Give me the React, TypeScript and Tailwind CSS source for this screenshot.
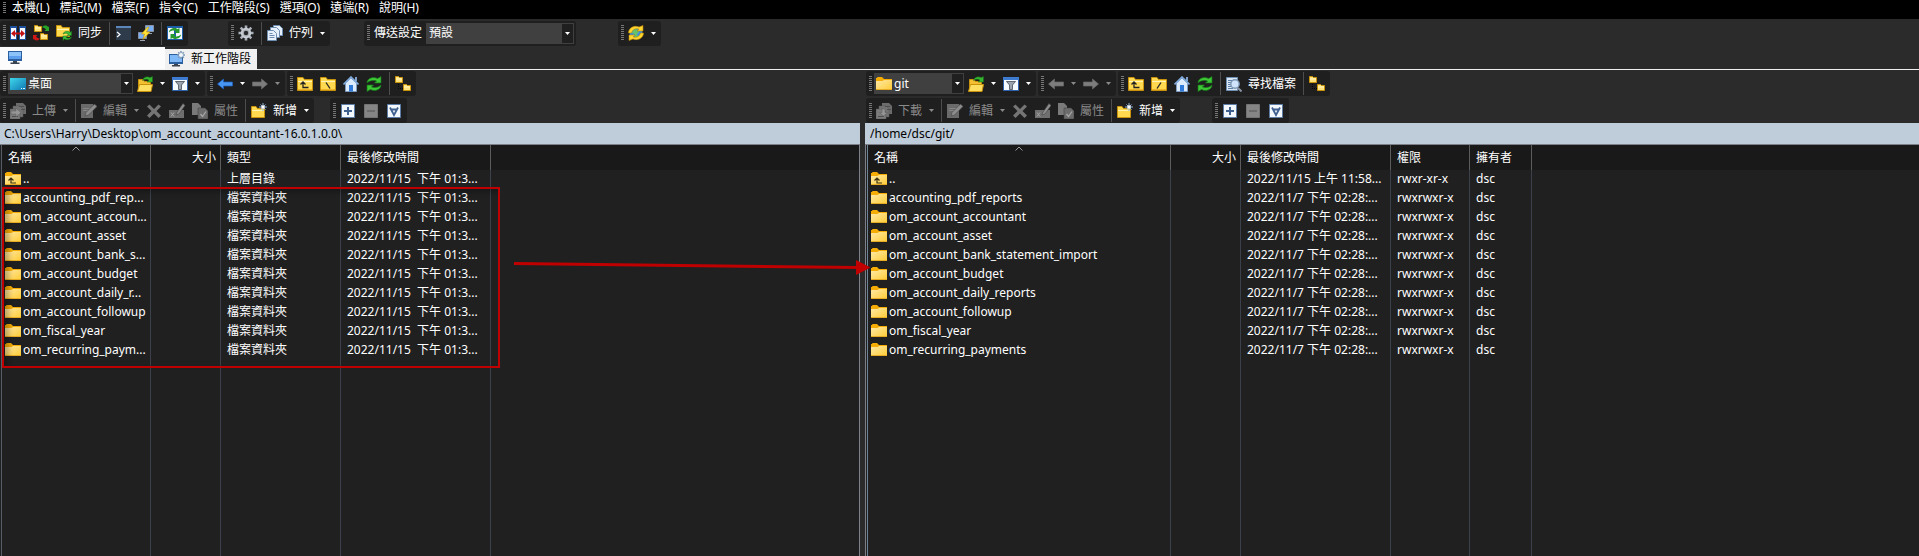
import React from "react";

type Kids = { children?: React.ReactNode };

/* ---------- icons ---------- */

function Svg({ children }: Kids) {
  return (
    <svg width="16" height="16" viewBox="0 0 16 16" className="block shrink-0" aria-hidden="true">
      {children}
    </svg>
  );
}

const MiniFolder = ({ x, y }: { x: number; y: number }) => (
  <g transform={`translate(${x} ${y})`}>
    <path d="M0.5 6.5V0.5H3.5L4.5 1.5H7.5V6.5Z" fill="#ffe27a" stroke="#c8920c" />
    <path d="M1 3h6" stroke="#fff5c4" />
  </g>
);

const FolderBase = () => (
  <>
    <path d="M0.5 14.5V1.5H6L7.5 3.5H15.5V14.5Z" fill="#ffd94f" stroke="#c8920c" />
    <path d="M1 5.5H15" stroke="#fff3b8" />
    <path d="M1 13.5H15" stroke="#eeb52a" />
  </>
);

const CompareIcon = () => (
  <Svg>
    <path d="M0 1h7v14H0zM9 1h7v14H9z" fill="#1c4f9c" />
    <path d="M1 3h5v11H1zM10 3h5v11H10z" fill="#f4f8ff" />
    <path d="M1 8.500L5 5v2.500h6V5l4 3.500-4 3.500V9.500H5V12z" fill="#c41212" />
  </Svg>
);
const SyncFoldersIcon = () => (
  <Svg>
    <MiniFolder x={1} y={0} />
    <MiniFolder x={7} y={8} />
    <path d="M9 2.500C10.500 0 14 0 15 2l1-.5V6h-4.500L13 4.500C12 3 10.500 2.500 9 2.500z" fill="#27a527" />
    <path d="M7 13.500C5.500 16 2 16 1 14l-1 .5V10h4.500L3 11.500c1 1.500 2.500 2 4 2z" fill="#d01818" />
  </Svg>
);
const FolderSyncIcon = () => (
  <Svg>
    <path d="M0.500 11.500V0.500H5L6.500 2.500H13.500V11.500Z" fill="#ffd94f" stroke="#c8920c" />
    <path d="M1 4.500H13" stroke="#fff3b8" />
    <path d="M7 9c1-3 5-3.500 7-1.500L15.500 6v4.500H11l1.500-1.500C11 8 9 8 7 9z" fill="#3cc03c" stroke="#16701a" strokeWidth=".5" />
    <path d="M15.500 12c-1 3-5 3.500-7 1.800L7 15.500V11h4.500L10 12.500c1.500 1 3.500.8 5.500-.5z" fill="#3cc03c" stroke="#16701a" strokeWidth=".5" />
  </Svg>
);
const TerminalIcon = () => (
  <Svg>
    <path d="M1 1h15v14H1z" fill="#2d3b4b" />
    <path d="M1 1h15v2H1z" fill="#5d86ba" />
    <path d="M2 7l3 2.500L2 12" stroke="#fff" strokeWidth="1.200" fill="none" />
  </Svg>
);
const PuttyIcon = () => (
  <Svg>
    <path d="M7.500 0.500h8v6h-8zM0.500 7.500h8v6h-8z" fill="#77aef5" stroke="#8793a3" />
    <path d="M10 8.500h4M2 15.500h5" stroke="#9aa4b2" />
    <path d="M9.500 2L3.500 9h3L5 14.500 12 7H8.500L11 2z" fill="#ffe23a" stroke="#c49207" strokeWidth=".6" />
  </Svg>
);
const RefreshBoxIcon = () => (
  <Svg>
    <path d="M0 1h16v14H0z" fill="#1c5fa8" />
    <path d="M1 3h6v11H1zM9 3h6v11H9z" fill="#f4f8ff" />
    <path d="M2 7.500c0-4 6-5.500 8.500-3.500L12.500 3v5H7.500L9 6.200C7 5 4 5.500 2 7.500z" fill="#279a2c" />
    <path d="M14 9.500c0 4-6 5.500-8.500 3.500L3.500 14V9h5L7 10.800c2 1.200 5 .7 7-1.300z" fill="#279a2c" />
  </Svg>
);
const GearIcon = () => (
  <Svg>
    <g stroke="#aab2bc" strokeWidth="2.600">
      <path d="M8 0.500v15M0.500 8h15M2.700 2.700l10.600 10.600M13.300 2.700L2.700 13.300" />
    </g>
    <circle cx="8" cy="8" r="5.200" fill="#c9ced4" />
    <circle cx="8" cy="8" r="3.400" fill="#a9afb7" />
    <circle cx="8" cy="8" r="2.200" fill="#26282b" />
  </Svg>
);
const QueueIcon = () => (
  <Svg>
    <g fill="#e6f0fb" stroke="#6d8cb0" strokeWidth="1">
      <path d="M6.500 0.500h6l3 3v7h-9z" />
      <path d="M3.500 2.500h6l3 3v7h-9z" />
      <path d="M0.500 5.500h6l3 3v7h-9z" />
    </g>
    <path d="M2.500 8.500h3M2.500 10.500h5M2.500 12.500h5" stroke="#6d8cb0" />
  </Svg>
);
const GlobeSyncIcon = () => (
  <Svg>
    <circle cx="8" cy="8" r="6.500" fill="#3d8fdc" />
    <path d="M5 5l4-1 2 3-2 2 1 3-3 1-1-4-2-1z" fill="#67c06a" />
    <path d="M0.500 8C0.500 3 6 0 11 2l4-1.500V6H9L11 4.200C7.500 3 4.500 4.500 3.500 8z" fill="#ffd52e" stroke="#b98505" strokeWidth=".6" />
    <path d="M15.500 8c0 5-5.500 8-10.500 6l-4 1.500V10h6L5 11.800c3.500 1.200 6.500-.3 7.500-3.800z" fill="#ffd52e" stroke="#b98505" strokeWidth=".6" />
  </Svg>
);
const MonitorIcon = () => (
  <Svg>
    <path d="M1 2h14v10H1z" fill="#2b5f9e" />
    <path d="M2 3h12v7H2z" fill="#8ec3fa" />
    <path d="M2 7h12v3H2z" fill="#5d9fec" />
    <path d="M6 12h4v1.500H6zM3.500 13.500h9V15h-9z" fill="#3a4450" />
  </Svg>
);
const MonitorNewIcon = () => (
  <Svg>
    <path d="M0 3h14v10H0z" fill="#2b5f9e" />
    <path d="M1 4h12v7H1z" fill="#7fb9f7" />
    <path d="M5 13h4v1H5zM3 14h8v1.500H3z" fill="#3a4450" />
    <path d="M12 0v8M8 4h8M9.200 1.200l5.600 5.600M14.800 1.200L9.200 6.800" stroke="#7f9ab8" strokeWidth="1.600" />
    <circle cx="12" cy="4" r="2" fill="#f4f8fc" />
  </Svg>
);
const DesktopIcon = () => (
  <Svg>
    <defs>
      <linearGradient id="desk" x1="0" y1="0" x2="1" y2="1">
        <stop offset="0" stopColor="#3fd6ea" />
        <stop offset="1" stopColor="#0f78b4" />
      </linearGradient>
    </defs>
    <path d="M0 2h16v12H0z" fill="url(#desk)" />
    <path d="M11 12.500h1M13 12.500h2" stroke="#d8f4ff" />
  </Svg>
);
const FolderOpenIcon = () => (
  <Svg>
    <path d="M1.500 14.500V3.500H6L7.500 5.500H13.500V8" fill="#f4bf31" stroke="#c8920c" />
    <path d="M0.500 15.500L2.500 8.500H15.500L14 15.500Z" fill="#ffdf62" stroke="#c8920c" />
    <path d="M5.500 4.500C6.500 1 10 0 13 1.500L15.500 0.500V6H10l2-1.800C10 3 8 3 5.500 4.500z" fill="#36b52f" stroke="#17691a" strokeWidth=".5" />
  </Svg>
);
const FilterIcon = () => (
  <Svg>
    <path d="M0.500 1.500h15v13H0.500z" fill="#f6fbff" stroke="#2c62ad" />
    <path d="M0 1h16v3H0z" fill="#3c7bd0" />
    <path d="M3.500 5.500h9L9.500 9v4.500h-3V9z" fill="#9aa3ad" stroke="#454c55" strokeWidth=".8" />
  </Svg>
);
const BackIcon = ({ on }: { on?: boolean }) => (
  <Svg>
    <path d="M0.500 8L6.500 3v3H15.500v4H6.500v3z" fill={on ? "#4796f2" : "#7d7d7d"} stroke={on ? "#1c5fbe" : "#696969"} strokeWidth=".7" />
  </Svg>
);
const ForwardIcon = () => (
  <Svg>
    <path d="M15.500 8L9.500 3v3H0.500v4H9.500v3z" fill="#7d7d7d" stroke="#696969" strokeWidth=".7" />
  </Svg>
);
const FolderUpIcon = () => (
  <Svg>
    <FolderBase />
    <path d="M6 6.500v5h5.500M3.500 8.500L6 6l2.500 2.500" fill="none" stroke="#222" strokeWidth="1.300" />
  </Svg>
);
const FolderRootIcon = ({ slash }: { slash: "left" | "right" }) => (
  <Svg>
    <FolderBase />
    <path d={slash === "left" ? "M6 6.500L10 12.500" : "M10 6.500L6 12.500"} stroke="#222" strokeWidth="1.300" />
  </Svg>
);
const HomeIcon = () => (
  <Svg>
    <path d="M2.500 7V15.500H13.500V7L8 2z" fill="#dcebfb" stroke="#7fa2cc" strokeWidth=".8" />
    <path d="M12 1h2v4h-2z" fill="#7fa2cc" />
    <path d="M0.500 8.500L8 1l7.500 7.500" fill="none" stroke="#7ea9da" strokeWidth="1.600" />
    <path d="M6 9h4v6.500H6z" fill="#2f7ad8" />
  </Svg>
);
const ReloadIcon = () => (
  <Svg>
    <path d="M1 7C1 2.500 7 0 11.500 2.500L15 0.500V7H8.500l2-2C7 4 3.500 4.500 1 7z" fill="#3ec836" stroke="#14701a" strokeWidth=".7" />
    <path d="M15 9c0 4.500-6 7-10.500 4.500L1 15.500V9h6.500l-2 2c3.500 1 7 .5 9.500-2z" fill="#3ec836" stroke="#14701a" strokeWidth=".7" />
  </Svg>
);
const TreeIcon = () => (
  <Svg>
    <MiniFolder x={0} y={0} />
    <MiniFolder x={8} y={8} />
    <path d="M3.500 8v4.500H8" fill="none" stroke="#050505" strokeDasharray="1 1" />
  </Svg>
);
const FindIcon = () => (
  <Svg>
    <path d="M0.500 1.500h11v13h-11z" fill="#d9e6f4" stroke="#6f8fb3" />
    <path d="M2 4.500h4M2 6.500h3M2 8.500h3M2 10.500h3M2 12.500h5" stroke="#5c7fa8" />
    <path d="M12 12l3.500 3.500" stroke="#8894a3" strokeWidth="2" />
    <circle cx="9" cy="8" r="4.200" fill="#cfe4fa" stroke="#7c96b3" strokeWidth="1.400" />
  </Svg>
);
const CopyDocsIcon = ({ down }: { down?: boolean }) => (
  <Svg>
    <path d="M6 0h7l3 3v8H6z" fill="#6c6c6c" />
    <path d="M3 3h7l3 3v8H3z" fill="#747474" stroke="#555" strokeWidth=".5" />
    <path d="M0 6h7l3 3v7H0z" fill="#7c7c7c" stroke="#555" strokeWidth=".5" />
    <path d="M9 3.500h5M11 6.500h4M2 13.500h6" stroke="#4e4e4e" />
    <path
      d={down ? "M9 6v3.500h2.500L7.500 13 3.500 9.500H6V6z" : "M1 8h5V5l5 4.500L6 14v-3H1z"}
      fill="#969696"
      stroke="#5a5a5a"
      strokeWidth=".5"
    />
  </Svg>
);
const EditIcon = () => (
  <Svg>
    <path d="M0 1h12v14H0z" fill="#6a6a6a" />
    <path d="M2 5.500h7M2 7.500h5" stroke="#858585" />
    <path d="M4 13l1-3.500L13.500 1 16 3.500 7.500 12z" fill="#8d8d8d" stroke="#444" strokeWidth=".6" />
  </Svg>
);
const DeleteIcon = () => (
  <Svg>
    <path d="M1 3.500L3.500 1.500 8 6l4.500-4.500L15 3.500 10.500 8l4.500 4.500-2.500 2.500L8 10.500 3.500 15 1 12.500 5.500 8z" fill="#757575" />
  </Svg>
);
const RenameIcon = () => (
  <Svg>
    <path d="M0 7h15v8H0z" fill="#6f6f6f" />
    <path d="M2 9.500l3 4M5 9.500l-3 4" stroke="#a6a6a6" />
    <path d="M7 12l1-3L14 0.500l2 2L10 11z" fill="#8d8d8d" stroke="#444" strokeWidth=".6" />
  </Svg>
);
const PropsIcon = () => (
  <Svg>
    <path d="M0 0h6l3 3v9H0z" fill="#7a7a7a" />
    <path d="M6 5h7l3 3v8H6z" fill="#6c6c6c" stroke="#444" strokeWidth=".6" />
    <path d="M8.500 11l2 2.500L14 8.500" stroke="#a8a8a8" strokeWidth="1.300" fill="none" />
  </Svg>
);
const NewFolderIcon = () => (
  <Svg>
    <path d="M0.500 14.500V3.500H5L6.500 5.500H13.500V14.500Z" fill="#ffd94f" stroke="#c8920c" />
    <path d="M1 7.500H13" stroke="#fff3b8" />
    <path d="M12 0v8M8 4h8M9.500 1.500l5 5M14.500 1.500l-5 5" stroke="#8fb3d8" />
    <circle cx="12" cy="4" r="1.800" fill="#fff" />
  </Svg>
);
const BoxIcon = ({ kind }: { kind: "plus" | "minus" | "filter" }) => (
  <Svg>
    <path d="M1.500 1.500h13v13h-13z" fill={kind === "minus" ? "#858585" : "#f3f8fd"} stroke={kind === "minus" ? "#737373" : "#5d7da6"} />
    {kind === "plus" && <path d="M8 4v8M4 8h8" stroke="#40618f" strokeWidth="2" />}
    {kind === "minus" && <path d="M4 8h8" stroke="#6b6b6b" strokeWidth="2" />}
    {kind === "filter" && <path d="M4 4.500L8 12l4-7.500M5 6.500h6" stroke="#40618f" strokeWidth="1.800" fill="none" />}
  </Svg>
);
const ListFolder = ({ up }: { up?: boolean }) => (
  <svg width="16" height="14" viewBox="0 0 16 14" className="block shrink-0" aria-hidden="true">
    <defs>
      <linearGradient id="fold" x1="0" y1="0" x2="1" y2="1">
        <stop offset="0" stopColor="#ffe9a6" />
        <stop offset="1" stopColor="#ffcb35" />
      </linearGradient>
    </defs>
    <path d="M0 1h1l.5-1H6l2 2h8v5H0z" fill="#f5ad06" />
    <path d="M0 4h6.500L8 3h8v10H0z" fill="url(#fold)" />
    <path d="M0 12.500h16" stroke="#e8ac24" />
    {up && <path d="M6 6v5h5M3.500 8.500L6 6l2.500 2.500" fill="none" stroke="#3b3215" strokeWidth="1.200" />}
  </svg>
);

/* ---------- toolbar parts ---------- */

const Arrow = ({ off }: { off?: boolean }) => (
  <svg width="5" height="3" viewBox="0 0 5 3" className="block shrink-0" aria-hidden="true">
    <path d="M0 0h5L2.500 3z" fill={off ? "#8a8a8a" : "#fff"} />
  </svg>
);

const Grip = () => (
  <div className="mr-px h-4 w-[3px] shrink-0 bg-[repeating-linear-gradient(to_bottom,#767676_0_1px,transparent_1px_2px)]" />
);

const Group = ({ children }: Kids) => (
  <div role="toolbar" className="flex h-[25px] shrink-0 items-center rounded-[3px] bg-[#1f1f1f] pr-px pl-[3px]">
    <Grip />
    {children}
  </div>
);

const Sep = () => <div className="mr-0.5 ml-[3px] h-[23px] w-px shrink-0 bg-[#4d4d4d]" />;

function Btn({ icon, text, label, off }: { icon: React.ReactNode; text?: string; label?: string; off?: boolean }) {
  return (
    <button
      type="button"
      disabled={off}
      aria-label={text ? undefined : label}
      className={`flex h-full shrink-0 items-center gap-1.5 pr-1 pl-[3px] whitespace-nowrap ${off ? "text-[#8a8a8a]" : "text-white"}`}
    >
      {icon}
      {text && <span>{text}</span>}
    </button>
  );
}

const Drop = ({ label, off }: { label: string; off?: boolean }) => (
  <button type="button" disabled={off} aria-label={label} className="flex h-full shrink-0 items-center pr-1 pl-[3px]">
    <Arrow off={off} />
  </button>
);

function Combo({ id, label, value, icon, width }: { id: string; label?: string; value: string; icon?: React.ReactNode; width: string }) {
  return (
    <div className={`relative mx-px flex h-[21px] shrink-0 items-center bg-[#404040] ${icon ? "pl-0.5" : ""} ${width}`}>
      {icon}
      <select
        id={id}
        aria-label={label}
        defaultValue={value}
        className={`h-full min-w-0 flex-1 appearance-none text-white outline-none ${icon ? "pl-0.5" : "pl-[3px]"}`}
      >
        <option>{value}</option>
      </select>
      <span className="pointer-events-none absolute inset-y-px right-px flex w-[11px] items-center justify-center bg-[#1f1f1f]">
        <Arrow />
      </span>
    </div>
  );
}

function PanelTools({ remote }: { remote?: boolean }) {
  return (
    <div className={`flex flex-col gap-0.5 pt-px ${remote ? "pl-px" : ""}`}>
      <div className="flex gap-0.5">
        <Group>
          {remote ? (
            <Combo id="remote-dir" label="遠端目錄" value="git" icon={<ListFolder />} width="w-[90px]" />
          ) : (
            <Combo id="local-dir" label="本機目錄" value="桌面" icon={<DesktopIcon />} width="w-[125px]" />
          )}
          <Btn icon={<FolderOpenIcon />} label="開啟目錄" />
          <Drop label="開啟目錄選單" />
          <Btn icon={<FilterIcon />} label="篩選" />
          <Drop label="篩選選單" />
        </Group>
        <Group>
          <Btn icon={<BackIcon on={!remote} />} label="上一頁" off={remote} />
          <Drop label="上一頁選單" off={remote} />
          <Btn icon={<ForwardIcon />} label="下一頁" off />
          <Drop label="下一頁選單" off />
        </Group>
        <Group>
          <Btn icon={<FolderUpIcon />} label="上層目錄" />
          <Btn icon={<FolderRootIcon slash={remote ? "right" : "left"} />} label="根目錄" />
          <Btn icon={<HomeIcon />} label="家目錄" />
          <Btn icon={<ReloadIcon />} label="重新整理" />
          <Sep />
          {remote && (
            <>
              <Btn icon={<FindIcon />} text="尋找檔案" />
              <Sep />
            </>
          )}
          <Btn icon={<TreeIcon />} label="目錄樹" />
        </Group>
      </div>
      <div className={`flex ${remote ? "gap-8" : "gap-4"}`}>
        <Group>
          <Btn icon={<CopyDocsIcon down={remote} />} text={remote ? "下載" : "上傳"} off />
          <Drop label="傳送選單" off />
          <Sep />
          <Btn icon={<EditIcon />} text="編輯" off />
          <Drop label="編輯選單" off />
          <Btn icon={<DeleteIcon />} label="刪除" off />
          <Btn icon={<RenameIcon />} label="重新命名" off />
          <Btn icon={<PropsIcon />} text="屬性" off />
          <Sep />
          <Btn icon={<NewFolderIcon />} text="新增" />
          <Drop label="新增選單" />
        </Group>
        <Group>
          <Btn icon={<BoxIcon kind="plus" />} label="選取" />
          <Btn icon={<BoxIcon kind="minus" />} label="取消選取" off />
          <Btn icon={<BoxIcon kind="filter" />} label="反向選取" />
        </Group>
      </div>
    </div>
  );
}

/* ---------- file table ---------- */

type Column = { title: string; width: string; right?: boolean };

function FileTable({ columns, rows }: { columns: Column[]; rows: string[][] }) {
  return (
    <table className="h-full w-full table-fixed border-separate border-spacing-0 text-left">
      <colgroup>
        {columns.map((c) => (
          <col key={c.title} className={c.width} />
        ))}
        <col />
      </colgroup>
      <thead>
        <tr className="h-[25px] bg-[#191919]">
          {columns.map((c, i) => (
            <th key={c.title} className={`relative border-r border-[#5c5c5c] py-0 font-normal ${c.right ? "pr-1 text-right" : "pl-1.5"}`}>
              {i === 0 && (
                <svg width="9" height="5" viewBox="0 0 9 5" className="absolute top-px left-1/2 -translate-x-1/2" aria-hidden="true">
                  <path d="M1 4.500L4.500 1 8 4.500" fill="none" stroke="#9a9a9a" />
                </svg>
              )}
              {c.title}
            </th>
          ))}
          <td />
        </tr>
      </thead>
      <tbody>
        {rows.map((r, n) => (
          <tr key={r[0]} className="h-[19px]">
            {r.map((cell, i) => (
              <td key={i} className={`overflow-hidden border-r border-[#3a414b] pt-0 pb-px leading-[18px] whitespace-pre ${i === 0 ? "pl-[3px]" : "pl-1.5"}`}>
                {i === 0 ? (
                  <div className="flex items-center gap-0.5">
                    <ListFolder up={n === 0} />
                    {cell}
                  </div>
                ) : (
                  cell
                )}
              </td>
            ))}
            <td />
          </tr>
        ))}
        <tr aria-hidden="true">
          {columns.map((c) => (
            <td key={c.title} className="border-r border-[#3a414b] p-0" />
          ))}
          <td />
        </tr>
      </tbody>
    </table>
  );
}

const localColumns: Column[] = [
  { title: "名稱", width: "w-[149px]" },
  { title: "大小", width: "w-[70px]", right: true },
  { title: "類型", width: "w-[120px]" },
  { title: "最後修改時間", width: "w-[150px]" },
];
const localDate = "2022/11/15  下午 01:3...";
const localRows = [
  ["..", "", "上層目錄", localDate],
  ...[
    "accounting_pdf_rep...",
    "om_account_accoun...",
    "om_account_asset",
    "om_account_bank_s...",
    "om_account_budget",
    "om_account_daily_r...",
    "om_account_followup",
    "om_fiscal_year",
    "om_recurring_paym...",
  ].map((n) => [n, "", "檔案資料夾", localDate]),
];

const remoteColumns: Column[] = [
  { title: "名稱", width: "w-[303px]" },
  { title: "大小", width: "w-[70px]", right: true },
  { title: "最後修改時間", width: "w-[150px]" },
  { title: "權限", width: "w-[79px]" },
  { title: "擁有者", width: "w-[62px]" },
];
const remoteRows = [
  ["..", "", "2022/11/15 上午 11:58...", "rwxr-xr-x", "dsc"],
  ...[
    "accounting_pdf_reports",
    "om_account_accountant",
    "om_account_asset",
    "om_account_bank_statement_import",
    "om_account_budget",
    "om_account_daily_reports",
    "om_account_followup",
    "om_fiscal_year",
    "om_recurring_payments",
  ].map((n) => [n, "", "2022/11/7 下午 02:28:...", "rwxrwxr-x", "dsc"]),
];

const menus = ["本機(L)", "標記(M)", "檔案(F)", "指令(C)", "工作階段(S)", "選項(O)", "遠端(R)", "說明(H)"];

export default function App() {
  return (
    <div className="relative flex h-screen flex-col overflow-hidden bg-[#2b2b2b] font-['Noto_Sans','Noto_Sans_CJK_TC',sans-serif] text-xs leading-4 text-white">
      <nav className="flex h-[19px] shrink-0 items-center bg-black pb-1 pl-[3px]">
        <div className="mr-1.5 h-3 w-[3px] bg-[repeating-linear-gradient(to_bottom,#767676_0_1px,transparent_1px_2px)]" />
        <div className="flex gap-2.5">
          {menus.map((m) => (
            <button key={m} type="button" className="whitespace-nowrap">
              {m}
            </button>
          ))}
        </div>
      </nav>

      <div className="flex h-7 shrink-0 items-center">
        <Group>
          <Btn icon={<CompareIcon />} label="比較目錄" />
          <Btn icon={<SyncFoldersIcon />} label="同步瀏覽" />
          <Btn icon={<FolderSyncIcon />} text="同步" />
          <Sep />
          <Btn icon={<TerminalIcon />} label="終端機" />
          <Btn icon={<PuttyIcon />} label="PuTTY" />
          <Sep />
          <Btn icon={<RefreshBoxIcon />} label="保持更新" />
        </Group>
        <div className="ml-10 flex">
          <Group>
            <Btn icon={<GearIcon />} label="偏好設定" />
            <Sep />
            <Btn icon={<QueueIcon />} text="佇列" />
            <Drop label="佇列選單" />
          </Group>
        </div>
        <div className="ml-[34px] flex">
          <Group>
            <label htmlFor="transfer" className="px-[3px]">
              傳送設定
            </label>
            <Combo id="transfer" value="預設" width="w-[148px]" />
          </Group>
        </div>
        <div className="ml-[42px] flex">
          <Group>
            <Btn icon={<GlobeSyncIcon />} label="更新" />
            <Drop label="更新選單" />
          </Group>
        </div>
      </div>

      <div role="tablist" className="flex h-[23px] shrink-0 items-end border-b border-[#f0f0f0] text-black">
        <button role="tab" type="button" aria-label="工作階段" className="flex h-[22px] w-[165px] items-center bg-[#fcfcfc] pb-0.5 pl-[7px]">
          <MonitorIcon />
        </button>
        <button role="tab" type="button" className="flex h-5 items-center gap-1.5 bg-[#f0f0f0] pr-1.5 pl-1 whitespace-nowrap">
          <MonitorNewIcon />
          新工作階段
        </button>
      </div>

      <main className="grid min-h-0 flex-1 grid-cols-[865fr_1054fr]">
        <section className="mr-[5px] flex min-h-0 min-w-0 flex-col">
          <PanelTools />
          <div className="h-[21px] shrink-0 bg-[#bfcddb] pl-1 leading-[22px] text-black">
            C:\Users\Harry\Desktop\om_account_accountant-16.0.1.0.0\
          </div>
          <div className="min-h-0 flex-1 border-t border-r border-[#7d8088] bg-[#202020] pl-px">
            <div className="h-full border-l border-[#555c66]">
              <FileTable columns={localColumns} rows={localRows} />
            </div>
          </div>
        </section>
        <section className="flex min-h-0 min-w-0 flex-col">
          <PanelTools remote />
          <div className="h-[21px] shrink-0 bg-[#bfcddb] pl-[5px] leading-[22px] text-black">/home/dsc/git/</div>
          <div className="min-h-0 flex-1 border-t border-l border-[#7d8088] bg-[#202020] pl-px">
            <div className="h-full border-l border-[#6f8397]">
              <FileTable columns={remoteColumns} rows={remoteRows} />
            </div>
          </div>
        </section>
      </main>

      <div className="pointer-events-none absolute top-[187px] left-0.5 h-[181px] w-[498px] border-2 border-[#c00000] shadow-[inset_5px_3px_5px_rgba(0,0,0,0.25)]" />
      <svg width="360" height="20" viewBox="0 0 360 20" className="pointer-events-none absolute top-[258px] left-[512px]" aria-hidden="true">
        <path d="M2 5.500L346 9.500" stroke="#c00000" strokeWidth="3" />
        <path d="M344 2l14.500 7.500L344 17z" fill="#c00000" />
      </svg>
    </div>
  );
}
